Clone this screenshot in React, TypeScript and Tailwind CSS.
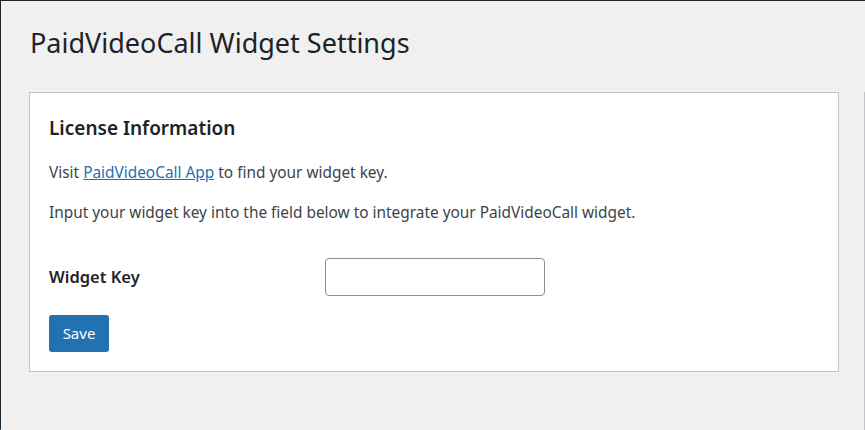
export default function App() {
  const font = { fontFamily: '"Noto Sans", "Open Sans", sans-serif' };
  return (
    <div className="flex h-[430px] w-[865px] overflow-hidden bg-[#f0f0f1]" style={font}>
      <div className="flex w-[1px] flex-col justify-end bg-[#1d2327]">
        <div className="h-[1px] bg-[#2271b1]" />
      </div>
      <div className="flex flex-1 flex-col border-t border-[#1d2327]">
        <h1 className="ml-[29px] mt-[20px] h-[44px] text-[27px] font-normal leading-[44px] text-[#1d2327]">
          PaidVideoCall Widget Settings
        </h1>
        <div className="mt-[27px] flex flex-1 items-start">
          <div className="ml-[28px] flex h-[280px] w-[810px] flex-col border border-[#c3c4c7] bg-white px-[19px]">
            <h2 className="mt-[21px] h-[28px] text-[19px] font-semibold leading-[28px] text-[#1d2327]">
              License Information
            </h2>
            <p className="mt-[20px] h-[22px] text-[15.4px] leading-[22px] text-[#3c434a]">
              Visit{" "}
              <a href="#" className="text-[#2271b1] underline">
                PaidVideoCall App
              </a>{" "}
              to find your widget key.
            </p>
            <p className="mt-[18px] h-[22px] text-[15.4px] leading-[22px] text-[#3c434a]">
              Input your widget key into the field below to integrate your PaidVideoCall widget.
            </p>
            <div className="mt-[34px] flex items-center">
              <div className="w-[276px] text-[16.5px] font-semibold text-[#1d2327]">Widget Key</div>
              <input
                type="text"
                className="h-[38px] w-[220px] rounded-[4px] border border-[#8c8f94] bg-white px-2 outline-none"
              />
            </div>
            <div className="mt-[19px]">
              <button className="h-[37px] w-[60px] rounded-[3px] bg-[#2271b1] text-[15px] text-white">
                Save
              </button>
            </div>
          </div>
          <div className="ml-[25px] h-[400px] flex-1 border-l border-[#c3c4c7]" />
        </div>
      </div>
    </div>
  );
}
